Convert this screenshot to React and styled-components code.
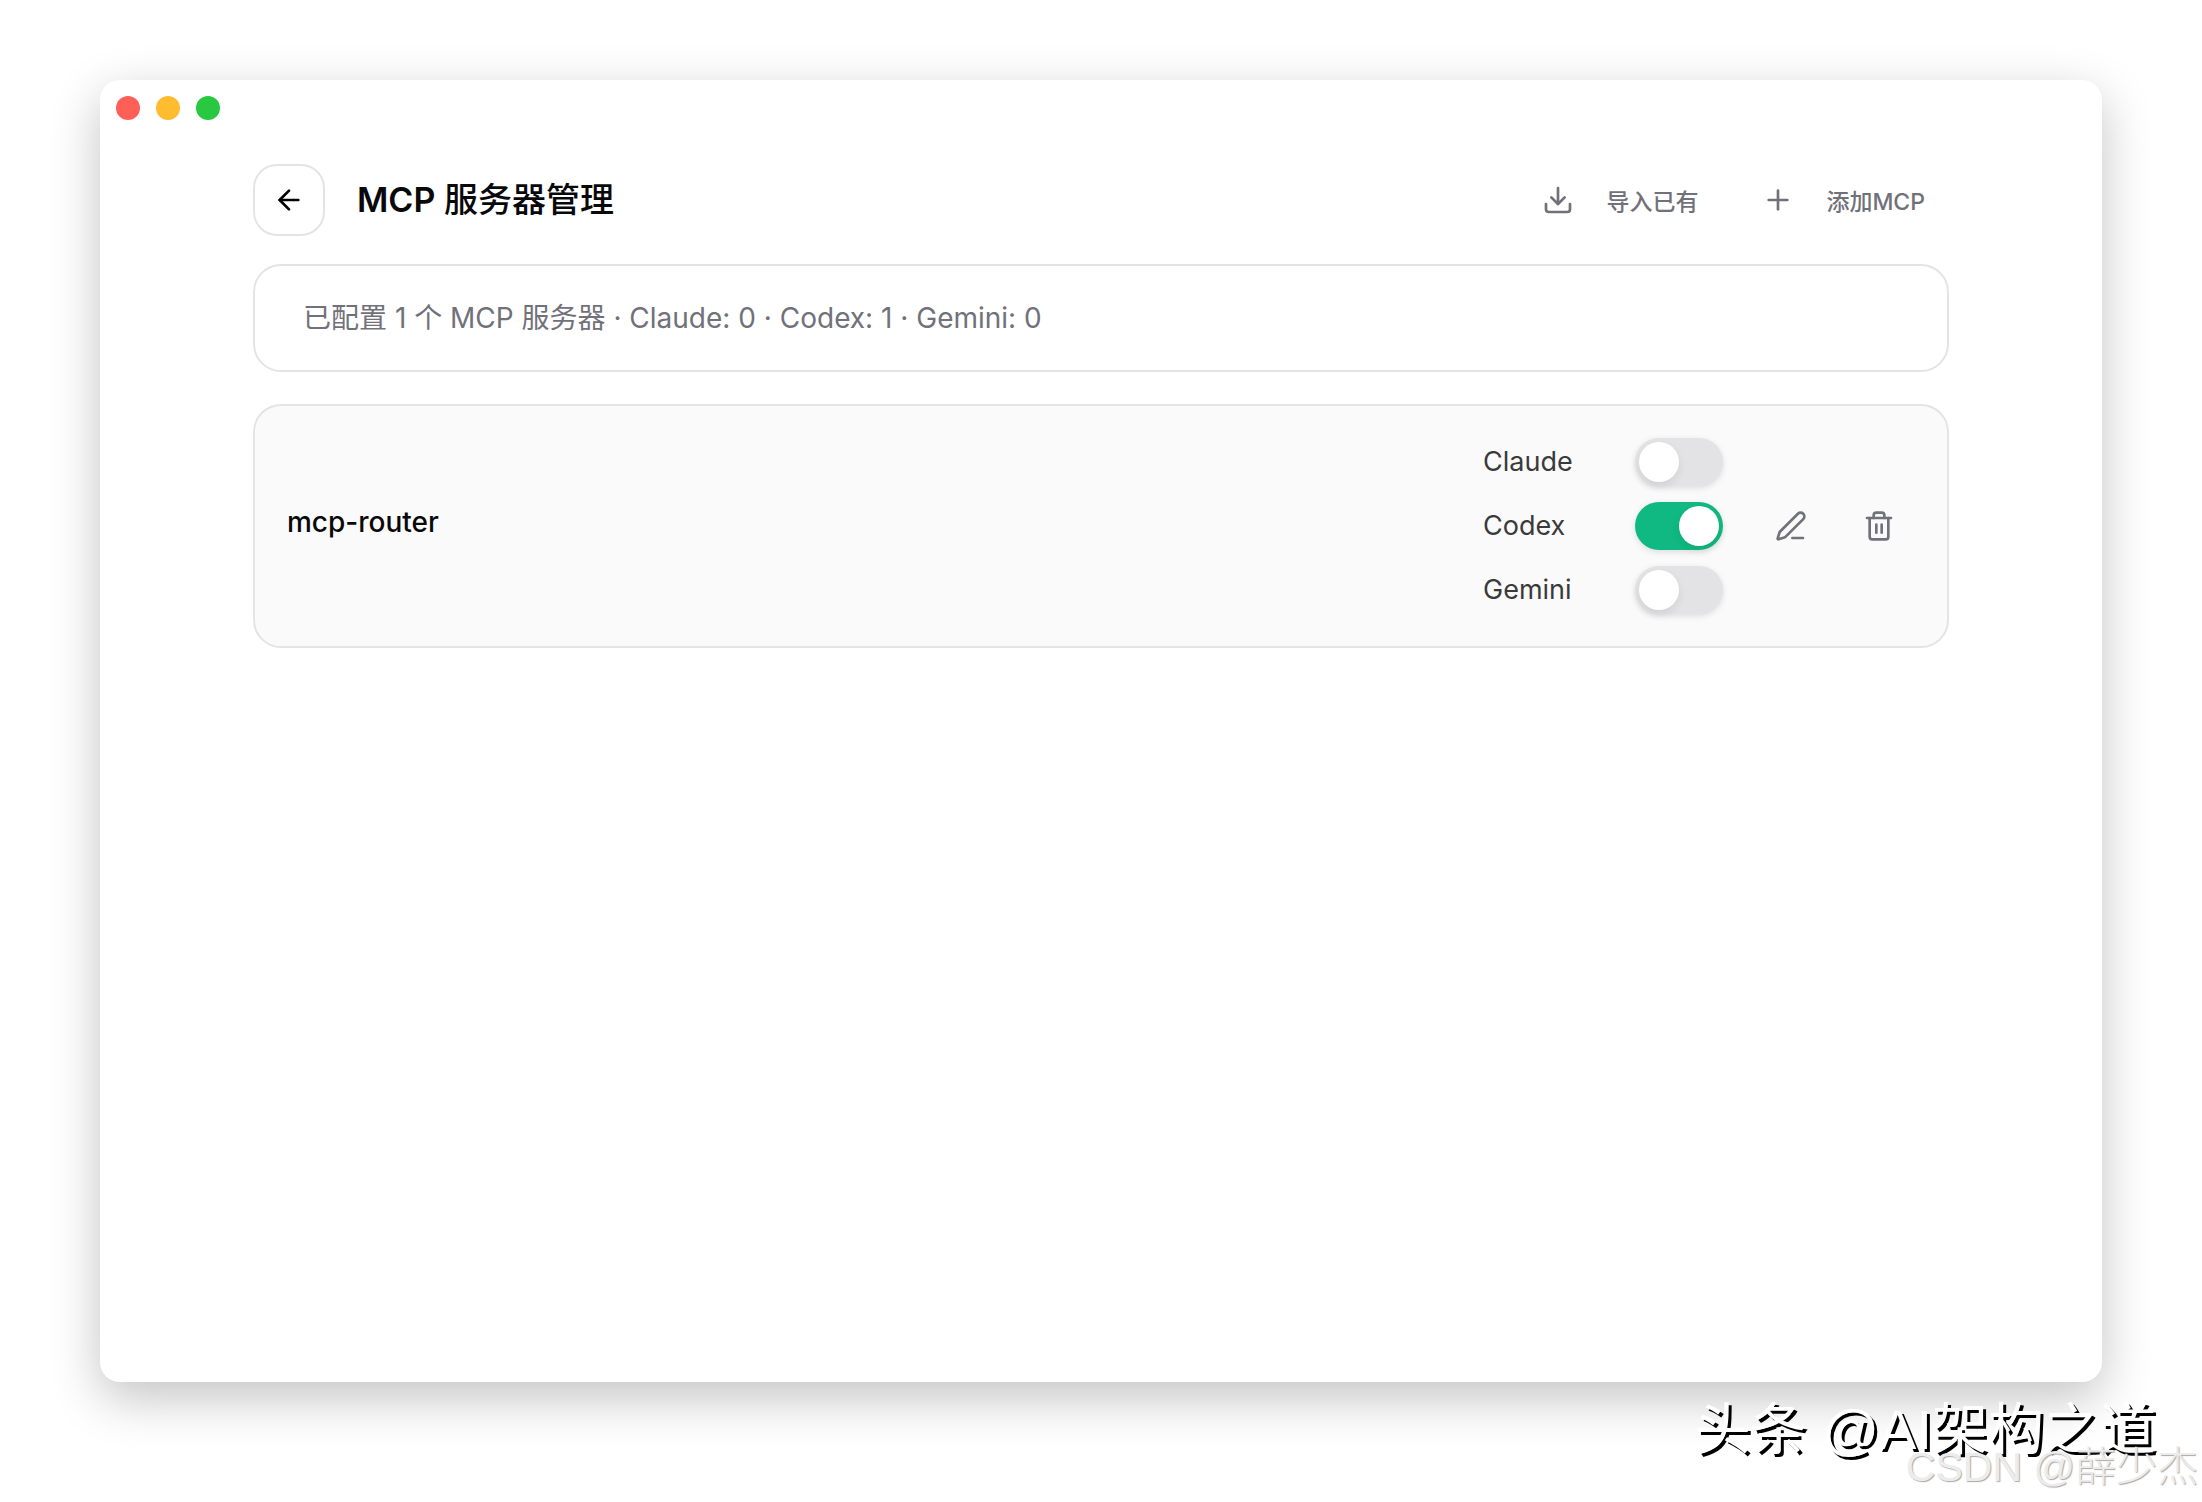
import { useState } from "react";
import styled, { createGlobalStyle } from "styled-components";
import { ArrowLeft, Download, PenLine, Plus, Trash2 } from "lucide-react";

const GlobalStyle = createGlobalStyle`
  * {
    box-sizing: border-box;
    margin: 0;
    padding: 0;
  }
  body {
    background-color: #ffffff;
    color: #09090b;
    font-family: Inter, "Noto Sans CJK SC", sans-serif;
  }
  button {
    border: none;
    background: none;
    font: inherit;
    cursor: pointer;
  }
`;

const Desktop = styled.div`
  position: relative;
  display: flex;
  flex-direction: column;
  min-height: 100vh;
  padding: 80px 100px 120px;
  overflow: hidden;
`;
const Window = styled.main`
  flex: 1;
  border-radius: 20px;
  background-color: #ffffff;
  box-shadow: 0 16px 50px rgba(0, 0, 0, 0.24);
`;
const TitleBar = styled.div`
  display: flex;
  gap: 16px;
  padding: 16px;
`;
const Light = styled.button`
  width: 24px;
  height: 24px;
  border-radius: 50%;
  && {
    background-color: ${(props) => props.$color};
  }
`;
const Content = styled.div`
  max-width: 1696px;
  margin: 0 auto;
  padding-top: 28px;
`;
const Header = styled.header`
  display: flex;
  align-items: center;
  justify-content: space-between;
  margin-bottom: 28px;
`;
const HeaderGroup = styled.div`
  display: flex;
  align-items: center;
  gap: ${(props) => props.$gap};
`;
const BackButton = styled.button`
  display: flex;
  align-items: center;
  justify-content: center;
  width: 72px;
  height: 72px;
  && {
    border: 2px solid #e4e4e7;
    border-radius: 24px;
  }
`;
const Title = styled.h1`
  font-size: 34px;
  font-weight: 600;
  line-height: 48px;
  span {
    font-weight: 500;
  }
`;
const ActionButton = styled.button`
  display: flex;
  align-items: center;
  gap: 32px;
  height: 64px;
  padding: 0 24px;
  color: #71717a;
  && {
    font-size: 23px;
    font-weight: 500;
  }
`;
const Summary = styled.p`
  margin-bottom: 32px;
  padding: 32px 48px;
  border: 2px solid #e4e4e7;
  border-radius: 28px;
  color: #71717a;
  font-size: 28px;
  line-height: 40px;
`;
const ServerCard = styled.section`
  display: flex;
  align-items: center;
  gap: 32px;
  padding: 32px;
  border: 2px solid #e4e4e7;
  border-radius: 28px;
  background-color: #fafafa;
`;
const ServerName = styled.h2`
  flex: 1;
  padding-bottom: 8px;
  font-size: 28px;
  font-weight: 500;
  line-height: 40px;
`;
const AppList = styled.div`
  display: flex;
  flex-direction: column;
  gap: 16px;
`;
const AppRow = styled.label`
  display: flex;
  align-items: center;
  justify-content: space-between;
  width: 240px;
  color: #3a3a3c;
  font-size: 27px;
  line-height: 48px;
`;
const Switch = styled.input`
  appearance: none;
  display: flex;
  width: 88px;
  height: 48px;
  padding: 4px;
  border-radius: 24px;
  background-color: #e3e3e5;
  box-shadow: 0 2px 6px rgba(0, 0, 0, 0.12);
  cursor: pointer;
  &::before {
    content: "";
    width: 40px;
    height: 40px;
    border-radius: 50%;
    background-color: #ffffff;
    box-shadow: 0 4px 8px rgba(0, 0, 0, 0.08);
  }
  &:checked {
    justify-content: flex-end;
    background-color: #10b981;
  }
`;
const IconActions = styled.div`
  display: flex;
  gap: 16px;
`;
const IconButton = styled.button`
  display: flex;
  align-items: center;
  justify-content: center;
  width: 72px;
  height: 72px;
  color: #71717a;
`;
const Watermark = styled.span`
  position: absolute;
  right: ${(props) => props.$right};
  bottom: ${(props) => props.$bottom};
  color: ${(props) => props.$color};
  font-size: ${(props) => props.$size};
  font-family: "Liberation Sans", "Noto Sans CJK SC", sans-serif;
  font-weight: ${(props) => props.$weight};
  line-height: 1;
  white-space: nowrap;
  text-shadow: ${(props) => props.$shadow};
`;

export default function App() {
  const [enabled, setEnabled] = useState({
    Claude: false,
    Codex: true,
    Gemini: false,
  });

  const toggle = (name) =>
    setEnabled((prev) => ({ ...prev, [name]: !prev[name] }));

  return (
    <>
      <GlobalStyle />
      <Desktop>
        <Window>
          <TitleBar>
            <Light $color="#ff5f57" aria-label="关闭" />
            <Light $color="#febc2e" aria-label="最小化" />
            <Light $color="#28c840" aria-label="缩放" />
          </TitleBar>
          <Content>
            <Header>
              <HeaderGroup $gap="32px">
                <BackButton aria-label="返回">
                  <ArrowLeft size={32} />
                </BackButton>
                <Title>
                  MCP <span>服务器管理</span>
                </Title>
              </HeaderGroup>
              <HeaderGroup $gap="16px">
                <ActionButton>
                  <Download size={32} />
                  导入已有
                </ActionButton>
                <ActionButton>
                  <Plus size={32} />
                  添加MCP
                </ActionButton>
              </HeaderGroup>
            </Header>
            <Summary>
              已配置 1 个 MCP 服务器 · Claude: 0 · Codex: 1 · Gemini: 0
            </Summary>
            <ServerCard>
              <ServerName>mcp-router</ServerName>
              <AppList>
                {Object.keys(enabled).map((name) => (
                  <AppRow key={name}>
                    {name}
                    <Switch
                      type="checkbox"
                      role="switch"
                      checked={enabled[name]}
                      onChange={() => toggle(name)}
                    />
                  </AppRow>
                ))}
              </AppList>
              <IconActions>
                <IconButton aria-label="编辑">
                  <PenLine size={32} />
                </IconButton>
                <IconButton aria-label="删除">
                  <Trash2 size={32} />
                </IconButton>
              </IconActions>
            </ServerCard>
          </Content>
        </Window>
        <Watermark
          $right="46px"
          $bottom="44px"
          $size="56px"
          $weight="400"
          $color="#ffffff"
          $shadow="3px 3px 0 #000000"
        >
          头条 @AI架构之道
        </Watermark>
        <Watermark
          $right="4px"
          $bottom="14px"
          $size="41px"
          $weight="300"
          $color="#ececec"
          $shadow="1px 1px 1px #a8a8a8"
        >
          CSDN @薛少杰
        </Watermark>
      </Desktop>
    </>
  );
}
